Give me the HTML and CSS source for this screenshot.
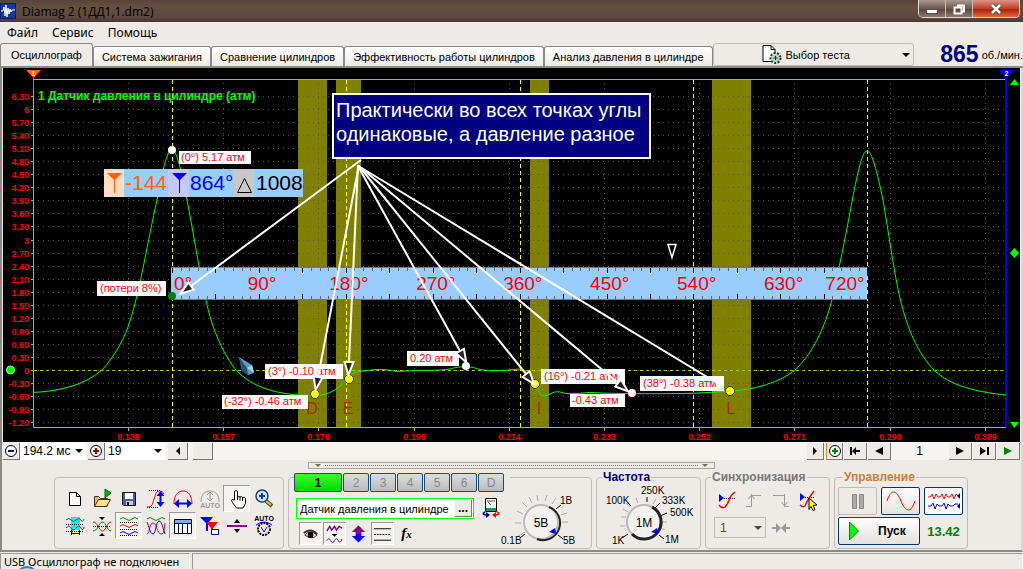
FILE: index.html
```
<!DOCTYPE html>
<html lang="ru">
<head>
  <meta charset="UTF-8">
  <meta name="viewport" content="width=device-width, initial-scale=1.0">
  <title>Diamag 2 (1ДД1,1.dm2)</title>
  <link rel="stylesheet" href="styles.css">
</head>
<body>
  <header class="titlebar">
    <svg class="logo" viewBox="0 0 16 16"><rect width="16" height="16" fill="#123a9c"/><rect x=".5" y=".5" width="15" height="15" fill="none" stroke="#0a1c66"/><path d="M1 8h2l1-4 1 9 1-11 1 12 1-9 1 6 1-5 1 3 1-2h3" fill="none" stroke="#fff"/></svg>
    <h1>Diamag 2 (1ДД1,1.dm2)</h1>
    <div class="win-btns">
      <button class="win-min" aria-label="Свернуть"><svg viewBox="0 0 14 12"><rect x="1.500" y="6.500" width="11" height="4" fill="#fff" stroke="#555"/></svg></button>
      <button class="win-max" aria-label="Развернуть"><svg viewBox="0 0 14 12"><path d="M5 2.500h7v6h-2M2.500 4.500h7v6h-7z" fill="none" stroke="#fff" stroke-width="2"/></svg></button>
      <button class="win-close" aria-label="Закрыть"><svg viewBox="0 0 14 12"><path d="M3 2l8 8M11 2l-8 8" stroke="#444" stroke-width="4"/><path d="M3 2l8 8M11 2l-8 8" stroke="#fff" stroke-width="2.500"/></svg></button>
    </div>
  </header>

  <nav class="menu">
    <button>Файл</button>
    <button>Сервис</button>
    <button>Помощь</button>
  </nav>

  <div class="tabs">
    <button class="tab active">Осциллограф</button>
    <button class="tab">Система зажигания</button>
    <button class="tab">Сравнение цилиндров</button>
    <button class="tab">Эффективность работы цилиндров</button>
    <button class="tab">Анализ давления в цилиндре</button>
    <div class="test-combo">
      <svg viewBox="0 0 20 21"><path d="M1 1.500h8l4 4v12H1z" fill="#fff" stroke="#000"/><path d="M9 1.500v4h4" fill="none" stroke="#000"/><circle cx="13.500" cy="14" r="5" fill="#cfe0d2" stroke="#233" stroke-width="2" stroke-dasharray="2 1.500"/><circle cx="13.500" cy="14" r="3.500" fill="#b6d0bd"/><path d="M13.500 12v4M11.500 14h4" stroke="#233"/></svg>
      <select aria-label="Выбор теста"><option>Выбор теста</option></select>
    </div>
    <div class="rpm"><b>865</b><span>об./мин.</span></div>
  </div>

  <main class="page">
    <svg class="chart" viewBox="3 68 1017 374">
      <defs>
        <marker id="head" markerUnits="userSpaceOnUse" markerWidth="18" markerHeight="14" refX="1" refY="7" orient="auto">
          <path d="M1 2.500L14 7 1 11.500z" fill="#222" stroke="#fff" stroke-width="2"/>
        </marker>
      </defs>
      <rect x="3" y="68" width="1017" height="374" fill="#000"/>
      <g fill="#808000">
        <rect x="298" y="79" width="29" height="348"/>
        <rect x="336" y="79" width="25" height="348"/>
        <rect x="530" y="79" width="19" height="348"/>
        <rect x="712" y="79" width="39" height="348"/>
      </g>
      <g id="grid" class="grid"></g>
      <g id="axis" class="axis"></g>
      <path class="zero" d="M34 370.500H1006"/>
      <path class="mark" d="M172.500 80V427M346.500 80V427M867.500 80V427M520.500 80V427M693.500 80V427"/>
      <path class="frame" d="M33.500 79V427.500H1006M33 79.500H1006"/>
      <path d="M33.500 74V90" stroke="#ff6400"/>
      <path d="M1006 76V427" stroke="#00f" stroke-width="2"/>
      <path d="M26 70h15l-7.500 8z" fill="#ff6400"/>
      <path d="M999 70h15l-7.500 8z" fill="#00f"/>
      <text class="flag" x="33.500" y="76">1</text>
      <text class="flag" x="1006.500" y="76">2</text>
      <path d="M1010 85l4.500-6 4.500 6zM1010 422h9l-4.500 6zM1010 253l4.500-5 4.500 5-4.500 5z" fill="#0f0"/>
      <circle cx="10.500" cy="370" r="4" fill="#0f0" stroke="#9f9"/>

      <text class="title" x="38" y="100">1 Датчик давления в цилиндре (атм)</text>
      <path class="curve" d="M33 392.500C60 391 85 385 102 370C116 355 126 335 130 321C140 290 148 240 157 200C162 172 167 150 172 150C177 150 182 174 187 200C193 230 199 270 206 300C212 330 224 355 236 370C252 387 275 395 315 396C330 395 340 388 348 378C353 372 358 371 364 371C375 369 385 369 397 371.500C415 370 440 371 450 369C460 366 468 366 475 368C485 372 500 371 520 369C527 369 530 377 535 384C539 390 540 397 545 396C551 394 555 390 562 392.500C572 396 585 391 600 393C630 394 670 394 700 393L730 391C755 390 780 382 795 370C812 354 824 330 832 300C839 268 845 240 851 207C857 175 862 151 867 151C872 151 877 172 883 200C889 235 893 265 898 289C906 328 918 354 935 371C950 385 975 392 1006 395"/>
      <g class="zone">
        <text x="312" y="414">D</text>
        <text x="348" y="414">E</text>
        <text x="539" y="414">I</text>
        <text x="731" y="414">L</text>
      </g>

      <rect x="171" y="267" width="696" height="33" fill="#99ccff"/>
      <path d="M171 267.500H867M171 299.500H867" stroke="#777"/>
      <g id="ruler"></g>

      <rect x="104" y="169" width="199" height="28" fill="#99ccff"/>
      <rect x="104" y="169" width="20" height="28" fill="#ffdcc4"/>
      <rect x="168" y="169" width="21" height="28" fill="#c4c8fa"/>
      <rect x="233" y="169" width="21" height="28" fill="#c8c8c8"/>
      <path d="M107 173h15l-7 7v13h-1v-13z" fill="#ff6400"/>
      <path d="M172 173h15l-7 7v13h-1v-13z" fill="#00f"/>
      <path d="M237.500 192.500l7-14 7 14z" fill="none" stroke="#000"/>
      <text class="readout" x="125" y="190" fill="#ff6400">-144</text>
      <text class="readout" x="190" y="190" fill="#00f">864°</text>
      <text class="readout" x="256" y="190" fill="#000">1008</text>

      <g fill="#fff">
        <rect x="179" y="151" width="72" height="13"/>
        <rect x="97" y="281" width="69" height="15"/>
        <rect x="265" y="364" width="78" height="15"/>
        <rect x="222" y="395" width="86" height="14"/>
        <rect x="407" y="351" width="52" height="15"/>
        <rect x="541" y="369" width="84" height="15"/>
        <rect x="570" y="394" width="55" height="13"/>
        <rect x="640" y="376" width="84" height="15"/>
      </g>
      <g class="tag">
        <text x="181" y="161">(0°) 5.17 атм</text>
        <text x="100" y="292">(потери 8%)</text>
        <text x="268" y="375">(3°) -0.10 атм</text>
        <text x="224" y="405">(-32°) -0.46 атм</text>
        <text x="410" y="362">0.20 атм</text>
        <text x="544" y="380">(16°) -0.21 атм</text>
        <text x="572" y="404">-0.43 атм</text>
        <text x="643" y="387">(38°) -0.38 атм</text>
      </g>
      <g fill="#fff">
        <circle cx="172" cy="150" r="4"/>
        <circle cx="466" cy="366" r="4"/>
        <circle cx="632" cy="393" r="4"/>
        <circle cx="172" cy="296" r="4" fill="#008000"/>
      </g>
      <g fill="#ff0" stroke="#333">
        <circle cx="315" cy="394" r="4.500"/>
        <circle cx="349" cy="379" r="4.500"/>
        <circle cx="535" cy="384" r="4.500"/>
        <circle cx="730" cy="391" r="4.500"/>
      </g>
      <path d="M239 357l13 8 2 8-6 2-6-4z" fill="#5d9cbc"/>
      <path d="M239 357l8 11 1 7-6-4z" fill="#24536e"/>
      <path d="M247 368l5-3 2 8z" fill="#a4d4e4"/>

      <rect x="333" y="94" width="317" height="64" fill="#000080" stroke="#fff" stroke-width="2"/>
      <text class="note" x="336" y="117">Практически во всех точках углы</text>
      <text class="note" x="336" y="141">одинаковые, а давление разное</text>
      <g class="arrows">
        <path d="M361 160L191 286"/>
        <path d="M359 165L318 377"/>
        <path d="M358 165L349 362"/>
        <path d="M358 166L460 351"/>
        <path d="M359 166L526 374"/>
        <path d="M360 167L618 383"/>
      </g>
      <path d="M360 167L722 386" stroke="#fff" stroke-width="2"/>
      <path d="M668 244.500h8l-4 13z" fill="#000" stroke="#fff" stroke-width="1.500"/>
    </svg>

    <div class="scroll-row">
      <button class="key" aria-label="Уменьшить"><svg viewBox="0 0 14 14"><circle cx="7" cy="7" r="5.500" fill="#fff" stroke="#000"/><path d="M4 7h6" stroke="#000080" stroke-width="2"/></svg></button>
      <select class="time" aria-label="Развертка"><option>194.2 мс</option></select>
      <button class="key" aria-label="Увеличить"><svg viewBox="0 0 14 14"><circle cx="7" cy="7" r="5.500" fill="#fff" stroke="#000"/><path d="M4 7h6M7 4v6" stroke="#a00000" stroke-width="2"/></svg></button>
      <select class="zoom" aria-label="Масштаб"><option>19</option></select>
      <button class="key wide" aria-label="Влево"><svg viewBox="0 0 14 14"><path d="M5 7l4-4v8z"/></svg></button>
      <button class="key thumb" aria-label="Прокрутка"></button>
      <div class="track"></div>
      <button class="key" aria-label="Вправо"><svg viewBox="0 0 14 14"><path d="M9 7L5 3v8z"/></svg></button>
      <button class="key add" aria-label="Добавить"><svg viewBox="0 0 14 14"><circle cx="7" cy="7" r="5.500" fill="#fff" stroke="#000"/><path d="M4 7h6M7 4v6" stroke="#008000" stroke-width="2"/></svg></button>
      <button class="key nav" aria-label="В начало"><svg viewBox="0 0 14 14"><path d="M2 3h2v8H2zM4 7l4-4v3h4v2H8v3z"/></svg></button>
      <button class="key nav" aria-label="Назад"><svg viewBox="0 0 14 14"><path d="M3 7l8-4v8z"/></svg></button>
      <output>1</output>
      <button class="key nav" aria-label="Вперед"><svg viewBox="0 0 14 14"><path d="M11 7L3 3v8z"/></svg></button>
      <button class="key nav" aria-label="В конец"><svg viewBox="0 0 14 14"><path d="M10 3h2v8h-2zM9 7L3 3v8z"/></svg></button>
      <button class="key nav" aria-label="Старт"><svg viewBox="0 0 14 14"><path d="M11 7L3 3v8z" fill="#008000"/></svg></button>
    </div>

    <div class="splitter">
      <svg viewBox="0 0 6 3"><path d="M0 0h6L3 3z" fill="#776a58"/></svg>
      <i></i>
      <svg viewBox="0 0 6 3"><path d="M0 0h6L3 3z" fill="#776a58"/></svg>
    </div>

    <div class="panels">
      <fieldset class="tools">
        <button aria-label="Новый"><svg viewBox="0 0 22 22"><path d="M5.500 4.500h7l4 4v9h-11zM12.500 4.500v4h4" fill="#fff" stroke="#000"/></svg></button>
        <button aria-label="Открыть"><svg viewBox="0 0 22 22"><path d="M3.500 18V8.500h4l2 2h7V18z" fill="#e8b84a" stroke="#432"/><path d="M3.500 18.500l4-7h12l-4 7z" fill="#ffe08a" stroke="#432"/><path d="M14 1l6 4-6 5z" fill="#00b000" stroke="#060"/></svg></button>
        <button aria-label="Сохранить"><svg viewBox="0 0 22 22"><path d="M4.500 4.500h13v13h-12l-1-1z" fill="#4a5fa8" stroke="#112"/><path d="M7 5h8v6H7z" fill="#fff"/><path d="M8 13h7v4H8z" fill="#ccc"/><path d="M9 14h2v3H9z" fill="#112"/></svg></button>
        <button aria-label="Амплитуда"><svg viewBox="0 0 22 22"><path d="M4 2.500h12M2 19.500h12" stroke="#000" stroke-dasharray="1 1"/><path d="M2 19c6 0 5-3 7-8s2-8 5-8 4 1 5 3" fill="none" stroke="red"/><path d="M15.500 6v10" stroke="#00f" stroke-width="2"/><path d="M11.500 8l4-5 4 5zM11.500 14h8l-4 5z" fill="#00f"/></svg></button>
        <button aria-label="Период"><svg viewBox="0 0 22 22"><path d="M2 16c0-9 4-13 9-13s9 4 9 13" fill="none" stroke="red"/><path d="M5 15.500h12" stroke="#00f" stroke-width="2"/><path d="M7 11v9l-5-4.500zM15 11v9l5-4.500z" fill="#00f"/></svg></button>
        <button aria-label="Авто" disabled><svg viewBox="0 0 22 22"><path d="M2 14C2 6 6 3 11 3s9 3 9 11M11 4v9M8 7l3-3 3 3M8 10l3 3 3-3" fill="none" stroke="#999"/><text x="11" y="20" class="auto" fill="#999">AUTO</text></svg></button>
        <button class="on" aria-label="Рука"><svg viewBox="0 0 22 22"><path d="M8.500 12V3.500q1.500-2 3 0V9q1.500-1 2.500 0 1.500-1 2.500.5 2-1 3 1v5L17 20h-6.500l-4-5.500q-2-3-.5-3z" fill="#fff" stroke="#000"/><path d="M11.500 8v4M14 9v3.500M16.500 9.500V13" stroke="#000"/></svg></button>
        <button aria-label="Лупа"><svg viewBox="0 0 22 22"><path d="M13 13l6 5" stroke="#5a4a1c" stroke-width="4"/><path d="M13 13l5 4" stroke="#e0c060" stroke-width="2"/><circle cx="9" cy="8" r="6" fill="#cfe2f8" stroke="#1c3f78" stroke-width="1.500"/><path d="M6 8h6M9 5v6" stroke="#173a9c" stroke-width="2"/></svg></button>
        <button aria-label="Окно"><svg viewBox="0 0 22 22"><path d="M7 2h9v13H7z" fill="#00f0ff"/><path d="M2 5q3-3 5 0t5 0 5 0 3-1" fill="none" stroke="green"/><path d="M2 13q3-4 5 0t5 0 5 0 3-1" fill="none" stroke="red"/><path d="M2 9.500h18M2 16.500h18" stroke="#000" stroke-dasharray="1 1"/><path d="M7.500 15v5M15.500 15v5M8 18.500h7" stroke="#000080"/></svg></button>
        <button aria-label="Наложить"><svg viewBox="0 0 22 22"><path d="M2 7c5 0 6 9 9.500 9S16 7 20 7" fill="none" stroke="red"/><path d="M2 16c5 0 6-9 9.500-9s4.500 9 8.500 9" fill="none" stroke="green"/><path d="M2 11.500h18" stroke="#000" stroke-dasharray="1 1"/><path d="M8 2h6l-3 3zM8 21h6l-3-3z"/></svg></button>
        <button class="on" aria-label="Разделить"><svg viewBox="0 0 22 22"><path d="M2 4q3-3 6 0t6 0 6 0" fill="none" stroke="green"/><path d="M2 11q3-3 6 0t6 0 6 0" fill="none" stroke="red"/><path d="M2 18q3-3 6 0t6 0 6 0" fill="none" stroke="#00f"/><path d="M2 7.500h18M2 14.500h18M2 20.500h18" stroke="#000" stroke-dasharray="1 1"/></svg></button>
        <button aria-label="Совместить"><svg viewBox="0 0 22 22"><path d="M2 4q3-3 6 0t6 0 6 0" fill="none" stroke="green"/><path d="M2 19C5 19 4 8 8 8s4 11 8 11 3-7 4-11" fill="none" stroke="red"/><path d="M2 7c2 4 3 12 6 12s3-13 6-13 4 8 6 13" fill="none" stroke="#00f"/></svg></button>
        <button class="on" aria-label="Таблица"><svg viewBox="0 0 22 22"><path d="M2.500 4.500h17v14h-17z" fill="#fff" stroke="#000"/><path d="M3 5h16v3H3z" fill="#78b4f0"/><path d="M2 8.500h18M6.500 8v10M10.500 8v10M15.500 8v10" stroke="#000"/></svg></button>
        <button aria-label="Метки"><svg viewBox="0 0 22 22"><path d="M1 2h13L9 8v8H7V8z" fill="#00f"/><path d="M7 7h12l-5 6v5h-2v-5z" fill="red"/><path d="M12.500 14.500h7v5h-7z" fill="#fff" stroke="#000080"/></svg></button>
        <button aria-label="Линия"><svg viewBox="0 0 22 22"><path d="M1 11h20" stroke="purple" stroke-width="2"/><path d="M8 8h6l-3-4zM8 14h6l-3 4z"/></svg></button>
        <button aria-label="Авто режим"><svg viewBox="0 0 22 22"><text x="11" y="6" class="auto" fill="#000">AUTO</text><path d="M3 10q8-6 16 0" fill="none" stroke="#00f"/><circle cx="11" cy="14" r="6" fill="#eee" stroke="#000" stroke-width="2" stroke-dasharray="2 1"/><path d="M8 12l3 5 3-5" fill="none" stroke="#00f"/></svg></button>
      </fieldset>

      <fieldset class="channel">
        <div class="channels">
          <button class="current">1</button>
          <button>2</button>
          <button>3</button>
          <button>4</button>
          <button>5</button>
          <button>6</button>
          <button>D</button>
        </div>
        <div class="channel-left">
          <div class="sensor-row">
            <div class="sensor">
              <input type="text" value="Датчик давления в цилиндре" aria-label="Датчик" readonly>
              <button aria-label="Выбрать датчик">...</button>
            </div>
            <svg viewBox="0 0 18 20"><path d="M3.500.5h11v13h-11z" fill="#fff" stroke="#000"/><path d="M4 10h10v3H4z" fill="#386"/><path d="M5 3h8M9 7l-3-3" stroke="#555"/><path d="M3 14q-4 2 1 3" fill="none" stroke="#000080" stroke-width="1.500"/><path d="M4 14v6l4-3z" fill="#000080"/><path d="M15 14q4 2-1 3" fill="none" stroke="red" stroke-width="1.500"/><path d="M14 14v6l-4-3z" fill="red"/></svg>
          </div>
          <div class="modes">
            <button class="on" aria-label="Видимость"><svg viewBox="0 0 22 22"><path d="M5 12q6-6 13 0-6 6-13 0z" fill="#fff" stroke="#222"/><circle cx="11" cy="12" r="3"/><path d="M4 10q7-6 14 1" fill="none" stroke="#422" stroke-width="2"/></svg></button>
            <button class="on" aria-label="Фильтр"><svg viewBox="0 0 22 22"><path d="M3 8l3-5 2 4 3-4 2 4 3-4 3 2" fill="none" stroke="purple" stroke-width="1.500"/><path d="M8 11h6l-3 3z"/><path d="M3 18q2-4 4 0t4 0 4 0 4-2" fill="none" stroke="purple"/></svg></button>
            <button aria-label="Инверсия"><svg viewBox="0 0 22 22"><path d="M11 2l7 7h-4v2H8V9H4z" fill="purple"/><path d="M11 20l7-7h-4v-2H8v2H4z" fill="#00f"/></svg></button>
            <button class="on" aria-label="Уровни"><svg viewBox="0 0 22 22"><path d="M2 5.500h18M2 17.500h18" stroke="#000"/><path d="M2 11.500h18" stroke="#000" stroke-dasharray="2 1"/></svg></button>
            <button class="fx">f<small>x</small></button>
          </div>
        </div>
        <svg class="knob" viewBox="500 492 80 56">
          <path class="ticks" d="M525 532l-7 4M521 523h-6M523 514l-6-3M527 507l-5-5M532 503l-3-6M538 501l-1-6M545 501l2-6M552 504l4-6M562 522h6M561 515l6-2"/>
          <path d="M525 534l-5 4M556 509l5-4M558 535l5 4" stroke="#000"/>
          <circle cx="541" cy="522" r="17" fill="#f3f1ee" stroke="#bbb" stroke-width="2"/>
          <path d="M549 507a17 17 0 0 1-12 32" fill="none" stroke="#222" stroke-width="2"/>
          <path d="M549 532l6-4 1 6z" fill="#00f"/>
          <text class="val" x="541" y="527">5В</text>
          <text x="501" y="544">0.1В</text><text x="560" y="504">1В</text><text x="563" y="544">5В</text>
        </svg>
      </fieldset>

      <fieldset class="freq">
        <legend>Частота</legend>
        <svg class="knob" viewBox="600 484 96 62">
          <path class="ticks" d="M626 517h-5M628 512l-5-3M638 503l-2-5M630 507l-4-4M653 504l3-5M661 522h6M660 528l5 2M625 526h-5"/>
          <path d="M628 534l-6 4M631 506l-3-3M647 502v-5M655 508l5-5M660 516l7-3M659 535l5 4" stroke="#000"/>
          <circle cx="644" cy="522" r="17" fill="#f3f1ee" stroke="#bbb" stroke-width="2"/>
          <path d="M652 507a17 17 0 1 1-20 27" fill="none" stroke="#222" stroke-width="3"/>
          <path d="M651 532l6-4 1 6z" fill="#00f"/>
          <text class="val" x="644" y="527">1М</text>
          <text x="641" y="494">250K</text><text x="606" y="504">100K</text><text x="662" y="504">333K</text>
          <text x="670" y="516">500K</text><text x="612" y="544">1K</text><text x="665" y="543">1M</text>
        </svg>
      </fieldset>

      <fieldset class="sync">
        <legend>Синхронизация</legend>
        <div class="sync-btns">
          <button aria-label="Уровень"><svg viewBox="0 0 22 22"><path d="M3 4l5 4-5 4z" fill="#00f"/><path d="M6 8.500h14" stroke="#000080" stroke-dasharray="1 1"/><path d="M3 15q3 4 6 2 3-3 4-7t6-8" fill="none" stroke="red" stroke-width="1.500"/></svg></button>
          <button aria-label="Фронт" disabled><svg viewBox="0 0 22 22"><path d="M3 16.500h5.500v-11H18M8.500 4v8M5.500 9l3-4 3 4" fill="none" stroke="#999"/></svg></button>
          <button aria-label="Спад" disabled><svg viewBox="0 0 22 22"><path d="M3 5.500h11.500v11H19M14.500 4v12M11.500 12l3 4 3-4" fill="none" stroke="#999"/></svg></button>
          <button aria-label="Захват"><svg viewBox="0 0 22 22"><path d="M3 3l5 4-5 4z" fill="#00f"/><path d="M6 7.500h12" stroke="#000080" stroke-dasharray="1 1"/><path d="M3 15q4 4 6-1t8-13" fill="none" stroke="red" stroke-width="1.500"/><path d="M12 8l8 7-4 .5 2 4-2 1-2-4-2 3z" fill="#ff0" stroke="#000"/></svg></button>
        </div>
        <div class="sync-src">
          <select aria-label="Канал" disabled><option>1</option></select>
          <svg viewBox="0 0 20 12"><path d="M1 5h4V1l5 5-5 5V7H1zM19 5h-4V1l-5 5 5 5V7h4z" fill="#999"/></svg>
        </div>
      </fieldset>

      <fieldset class="control">
        <legend>Управление</legend>
        <button class="big" aria-label="Пауза" disabled><svg viewBox="0 0 32 20"><path d="M10.500 3.500h4v14h-4zM17.500 3.500h4v14h-4z" fill="#aaa" stroke="#888"/></svg></button>
        <button class="big" aria-label="Один канал"><svg viewBox="0 0 32 20"><path d="M2 10C6 -2 11-2 16 10s10 12 14 0" fill="none" stroke="red"/></svg></button>
        <button class="big lit" aria-label="Все каналы"><svg viewBox="0 0 32 20"><path d="M0 6h2l2-3 2 5 2-5 2 3h2l2-3 2 5 2-5 2 3h2l2-3 2 5 2-5 2 2" fill="none" stroke="red"/><path d="M0 15h3l2-3 2 6 2-5 2 2h3l2-3 2 6 2-5 2 2h3l2-2h3" fill="none" stroke="#00f"/><path d="M29 5l3-3v6zM29 15l3-3v6z" fill="#000080"/></svg></button>
        <button class="big start"><svg viewBox="0 0 10 20"><path d="M.5 1l9 9-9 9z" fill="#0f0" stroke="#080"/></svg>Пуск</button>
        <output>13.42</output>
      </fieldset>
    </div>
  </main>

  <footer class="status">
    <div>USB Осциллограф не подключен</div>
    <div></div>
    <span class="orb"></span>
  </footer>

  <script>
  const ns = "http://www.w3.org/2000/svg"

  function add(parent, name, attrs, text) {
    const el = document.createElementNS(ns, name)
    for (const key in attrs) el.setAttribute(key, attrs[key])
    if (text !== undefined) el.textContent = text
    parent.appendChild(el)
  }

  const grid = document.getElementById("grid")
  const axis = document.getElementById("axis")
  const ruler = document.getElementById("ruler")

  // pressure axis, 0.3 atm per row
  for (let i = 21; i >= -4; i--) {
    const y = Math.round(370 - i * 13.05) + 0.5
    const value = i * 0.3
    const label = i % 10 == 0 ? String(Math.round(value)) : value.toFixed(2)
    add(grid, "path", { d: `M38 ${y}H1004` })
    add(axis, "path", { d: `M31 ${y}h3` })
    add(axis, "text", { x: 29, y: y + 3, "text-anchor": "end" }, label)
  }

  // time axis
  const times = ["0.138", "0.157", "0.176", "0.195", "0.214", "0.233", "0.252", "0.271", "0.290", "0.309"]
  times.forEach((time, i) => {
    const x = Math.round(128 + i * 95.2) + 0.5
    add(grid, "path", { d: `M${x} 83V426` })
    add(axis, "path", { d: `M${x} 427v4`, stroke: "#888" })
    add(axis, "text", { x: x, y: 440, "text-anchor": "middle" }, time)
  })

  // crank angle ruler, 9 degrees per tick
  for (let i = 0; i <= 80; i++) {
    const x = Math.round(172 + i * 8.69) + 0.5
    const len = i % 5 == 0 ? 5 : 3
    const color = i % 5 == 0 ? "#000" : "#666"
    add(ruler, "path", { d: `M${x} 268v${len}M${x} 299v-${len}`, stroke: color })
  }
  for (let deg = 0; deg <= 720; deg += 90) {
    let x = 262 + (deg - 90) * 0.966
    if (deg == 0) x = 183
    if (deg == 720) x = 845
    add(ruler, "text", { x: x, y: 290, class: "deg" }, deg + "°")
  }
  </script>
</body>
</html>
```

FILE: styles.css
```
:root {
  --face: #eeebe6;
  --line: #8c8a86;
  --soft: #bfbcb7;
}
* { box-sizing: border-box; }
body {
  margin: 0;
  background: var(--face);
  font: 12px "Liberation Sans", Arial, sans-serif;
  color: #000;
}
button, select, input {
  font: inherit;
  color: inherit;
  border: none;
  background: none;
  padding: 0;
  margin: 0;
}
select {
  appearance: none;
  opacity: 1;
  background: url("data:image/svg+xml,%3Csvg xmlns='http://www.w3.org/2000/svg' width='8' height='4'%3E%3Cpath d='M0 0h8L4 4z'/%3E%3C/svg%3E") right 3px center no-repeat;
}

.titlebar {
  display: flex;
  align-items: center;
  gap: 6px;
  height: 22px;
  background: linear-gradient(#594238, #66503f 30%, #5c473e 80%, #49372f);
}
.logo { width: 16px; height: 16px; }
.titlebar h1 {
  flex: 1;
  margin: 0;
  font: 12px "Open Sans", sans-serif;
}
.win-btns {
  display: flex;
  align-self: flex-start;
  margin-right: 3px;
  border: 1px solid #e0d8d4;
  border-top: none;
  border-radius: 0 0 5px 5px;
  overflow: hidden;
}
.win-btns button {
  width: 27px;
  height: 17px;
  border-right: 1px solid #c8bcb6;
  background: linear-gradient(#a8988f, #6b574d 50%, #574238 51%, #8b776b);
}
.win-btns .win-close {
  width: 46px;
  border: none;
  background: linear-gradient(#d89484, #c04028 50%, #a81c08 51%, #e06840);
}
.win-btns svg { width: 14px; height: 12px; display: block; margin: auto; }

.menu {
  display: flex;
  gap: 14px;
  height: 21px;
  padding-left: 7px;
  font: 12px "Noto Sans", sans-serif;
}

.tabs {
  display: flex;
  align-items: flex-end;
  height: 25px;
  border-bottom: 2px solid var(--line);
  font-size: 11px;
}
.tab {
  height: 20px;
  padding: 0 8px;
  border: 1px solid #888;
  border-bottom: none;
  border-radius: 3px 3px 0 0;
  background: linear-gradient(#fff, #eceae6);
  white-space: nowrap;
}
.tab.active {
  height: 23px;
  padding: 0 10px;
  background: var(--face);
}
.test-combo {
  display: flex;
  align-items: center;
  flex: 0 1 201px;
  gap: 4px;
  height: 23px;
  padding-left: 48px;
  border: 1px solid var(--soft);
  border-radius: 3px;
}
.test-combo svg { flex: none; width: 20px; height: 21px; }
.test-combo select { flex: 1; }
.rpm {
  display: flex;
  align-items: center;
  gap: 3px;
  height: 23px;
  margin-left: auto;
  white-space: nowrap;
}
.rpm b { font-size: 23px; color: #000080; }

.page {
  border-left: 2px solid var(--line);
  border-right: 2px solid #dcd8d2;
  border-bottom: 2px solid var(--line);
  padding: 0 1px;
}
.chart { display: block; width: 100%; }
.chart text { font-family: "Liberation Sans", Arial, sans-serif; }
.grid path { stroke: #555; stroke-dasharray: 1 4; shape-rendering: crispEdges; }
.axis path { stroke: #9acd00; shape-rendering: crispEdges; }
.axis text { fill: #f00; font-size: 9px; font-weight: bold; }
.zero { stroke: #9acd00; stroke-dasharray: 3 3; shape-rendering: crispEdges; }
.mark { stroke: #ff0; stroke-dasharray: 4 3; shape-rendering: crispEdges; }
.frame { fill: none; stroke: #9acd00; }
.chart .flag { fill: #fff; font-size: 7px; font-weight: bold; text-anchor: middle; }
.chart .title { fill: #0f0; font-size: 12px; font-weight: bold; }
.curve { fill: none; stroke: #0f0; }
.zone text { fill: #a03000; font-size: 16px; text-anchor: middle; }
.deg { fill: #f00; font-size: 19px; text-anchor: middle; }
.readout { font-size: 21px; }
.tag text { fill: #f00; font-size: 11px; }
.note { fill: #fff; font-size: 20px; }
.arrows path { fill: none; stroke: #fff; stroke-width: 2; marker-end: url(#head); }

.scroll-row {
  display: flex;
  align-items: center;
  height: 18px;
  background: #f6f4f0;
}
.key {
  width: 17px;
  height: 17px;
  background: var(--face);
  border-right: 1px solid #777;
  border-bottom: 1px solid #777;
}
.key svg { display: block; width: 14px; height: 14px; margin: auto; }
.key.wide { width: 20px; margin: 0 5px 0 3px; }
.key.thumb { width: 20px; }
.key.nav { width: 23px; margin-left: 1px; }
.key.add { border-left: 1px solid #e08030; margin-left: 2px; }
.scroll-row select { height: 17px; padding-left: 3px; background-color: #fff; }
.time { width: 66px; margin-right: 2px; }
.zoom { width: 60px; }
.track { flex: 1; }
.scroll-row output { width: 57px; text-align: center; }

.splitter {
  display: flex;
  align-items: center;
  gap: 4px;
  width: 40%;
  height: 7px;
  margin: 2px auto 0;
  padding: 0 6px;
  border: 1px solid #a8a49e;
}
.splitter i { flex: 1; border-top: 1px dotted #777; }
.splitter svg { width: 6px; height: 3px; }

.panels {
  display: grid;
  grid-template-columns: 230px 304px 105px 125px 134px;
  gap: 4px;
  height: 72px;
  margin: 8px 0 1px 51px;
}
fieldset {
  min-width: 0;
  margin: 0;
  padding: 0;
  border: 1px solid var(--soft);
  border-radius: 4px;
}
legend {
  height: 1px;
  line-height: 1px;
  margin-left: 5px;
  padding: 0 1px;
  font-weight: bold;
}
.tools {
  display: grid;
  grid-template-columns: repeat(8, 27px);
  grid-auto-rows: 27px;
  padding: 7px 6px;
}
.tools button, .modes button, .sync-btns button {
  display: flex;
  align-items: center;
  justify-content: center;
  border: 1px solid transparent;
}
.tools svg, .modes svg, .sync-btns svg { width: 22px; height: 22px; }
.tools .on, .modes .on {
  border-color: #999 #fff #fff #999;
  background: #f5f3f0;
}
.auto { font: bold 7px "Liberation Sans", sans-serif; text-anchor: middle; }

.channel {
  display: grid;
  grid-template-columns: 206px 80px;
  grid-template-rows: 14px 56px;
  padding-left: 5px;
}
.channels {
  display: flex;
  gap: 1px;
  height: 19px;
  margin-top: -5px;
  grid-column: 1 / 3;
  justify-self: start;
  padding-right: 6px;
  background: var(--face);
}
.channels button {
  width: 26px;
  border: 1px solid #1a4a7c;
  border-radius: 2px;
  background: linear-gradient(#ddd, #bbb);
  color: #888;
}
.channels .current {
  width: 48px;
  background: linear-gradient(#3f3, #00d800);
  color: #000;
  font-weight: bold;
}
.sensor-row { display: flex; gap: 8px; padding: 6px 0 0 2px; }
.sensor-row > svg { width: 18px; height: 20px; }
.sensor {
  display: flex;
  align-items: center;
  width: 178px;
  height: 21px;
  padding: 1px;
  border: 1px solid #0f0;
  background: #fff;
}
.sensor input { flex: 1; min-width: 0; padding-left: 2px; font-size: 11px; }
.sensor button {
  width: 17px;
  height: 17px;
  line-height: 8px;
  border-right: 1px solid #777;
  border-bottom: 1px solid #777;
  background: var(--face);
  font-weight: bold;
}
.modes { display: flex; gap: 1px; padding: 3px 0 0 5px; }
.modes button { width: 23px; height: 23px; }
.modes .fx { font: italic bold 15px "Liberation Serif", serif; }
.modes .fx small { font-size: 11px; }

.knob { display: block; }
.channel .knob { width: 80px; height: 56px; }
.freq .knob { width: 96px; height: 62px; margin: 6px 0 0 3px; }
.knob text { font: 10px "Liberation Sans", Arial, sans-serif; }
.knob .val { font-size: 12px; text-anchor: middle; }
.ticks { stroke: #aaa; }
.freq legend { color: #000080; }

.sync legend { color: #777; }
.sync-btns { display: flex; gap: 3px; padding: 11px 0 0 9px; }
.sync-btns button { width: 24px; height: 24px; }
.sync-src { display: flex; align-items: center; gap: 5px; padding: 4px 8px; }
.sync-src svg { width: 20px; height: 12px; }
.sync select {
  width: 52px;
  height: 21px;
  padding-left: 5px;
  border: 1px solid #aaa;
  opacity: .7;
}

.control legend { color: #c88038; }
.control {
  display: grid;
  grid-template-columns: repeat(3, 39px);
  grid-auto-rows: 28px;
  gap: 2px 4px;
  padding: 9px 0 0 3px;
}
.big {
  display: flex;
  align-items: center;
  justify-content: center;
  border: 1px solid #00366c;
  border-radius: 2px;
  background: linear-gradient(#fff, #e6e2dc);
}
.big svg { width: 32px; height: 20px; }
.big:disabled { border-color: var(--soft); background: var(--face); }
.big.lit { background: #fff; }
.big.start {
  grid-column: 1 / 3;
  justify-content: flex-start;
  gap: 19px;
  padding-left: 10px;
  font-weight: bold;
}
.big.start svg { width: 10px; }
.control output {
  align-self: center;
  text-align: center;
  color: #008000;
  font-weight: bold;
  font-size: 13px;
}

.status {
  position: relative;
  display: grid;
  grid-template-columns: 190px 1fr;
  gap: 2px;
  height: 16px;
  margin-top: 1px;
  overflow: hidden;
  font: 11px "Noto Sans", sans-serif;
}
.status div {
  border: 1px solid #999;
  border-bottom: none;
  border-right-color: #fff;
  padding-left: 3px;
  white-space: nowrap;
}
.orb {
  position: absolute;
  left: 15px;
  top: 13px;
  width: 24px;
  height: 24px;
  border: 2px solid #4a7ba4;
  border-radius: 50%;
  background: #a8c8dc;
}
```
